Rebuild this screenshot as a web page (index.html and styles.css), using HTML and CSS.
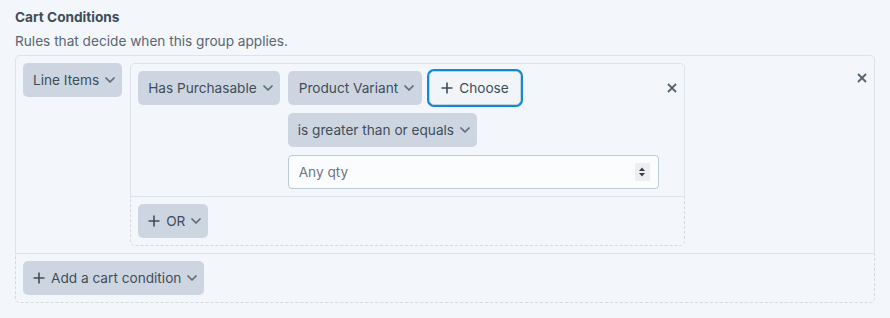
FILE: index.html
```html
<!DOCTYPE html>
<html>
<head>
<meta charset="utf-8">
<link rel="stylesheet" href="styles.css">
</head>
<body>
<div class="page">
  <div class="title">Cart Conditions</div>
  <div class="subtitle">Rules that decide when this group applies.</div>
  <div class="conditions">
    <div class="cond-row">
      <div class="btn select">Line Items <svg class="chev" viewBox="0 0 10 6"><path d="M1 1l4 4 4-4"/></svg></div>
      <div class="rule-group">
        <div class="rule">
          <div class="btn select">Has Purchasable <svg class="chev" viewBox="0 0 10 6"><path d="M1 1l4 4 4-4"/></svg></div>
          <div class="rule-col">
            <div class="line">
              <div class="btn select wide">Product Variant <svg class="chev" viewBox="0 0 10 6"><path d="M1 1l4 4 4-4"/></svg></div>
              <div class="btn choose"><svg class="plus" viewBox="0 0 12 12"><path d="M6 0.5v11M0.5 6h11"/></svg>Choose</div>
            </div>
            <div class="line">
              <div class="btn select">is greater than or equals <svg class="chev" viewBox="0 0 10 6"><path d="M1 1l4 4 4-4"/></svg></div>
            </div>
            <div class="line">
              <div class="input-wrap">
                <input class="text" type="text" placeholder="Any qty">
                <span class="spin"><svg viewBox="0 0 8 12"><path d="M4 1.5L7 5H1z M4 10.5L1 7h6z"/></svg></span>
              </div>
            </div>
          </div>
          <div class="close"><svg viewBox="0 0 10 10"><path d="M1 1l8 8M9 1l-8 8"/></svg></div>
        </div>
        <div class="or-row">
          <div class="btn select"><svg class="plus" viewBox="0 0 12 12"><path d="M6 0.5v11M0.5 6h11"/></svg>OR <svg class="chev" viewBox="0 0 10 6"><path d="M1 1l4 4 4-4"/></svg></div>
        </div>
      </div>
      <div class="close outer-close"><svg viewBox="0 0 10 10"><path d="M1 1l8 8M9 1l-8 8"/></svg></div>
    </div>
    <div class="add-row">
      <div class="btn select"><svg class="plus" viewBox="0 0 12 12"><path d="M6 0.5v11M0.5 6h11"/></svg>Add a cart condition <svg class="chev" viewBox="0 0 10 6"><path d="M1 1l4 4 4-4"/></svg></div>
    </div>
  </div>
</div>
</body>
</html>
```
FILE: styles.css
```css
html, body {
  margin: 0;
  padding: 0;
  background: #f3f6fa;
}
body {
  font-family: Inter, "Noto Sans", sans-serif;
  font-size: 13.65px;
  color: #3f4d5a;
}
.page {
  padding: 7px 15px 15px 15px;
}
.title {
  font-weight: 700;
  line-height: 20px;
  color: #3f4d5a;
}
.subtitle {
  margin-top: 4px;
  line-height: 20px;
  color: #596673;
}
.conditions {
  margin-top: 4px;
}
.cond-row {
  display: flex;
  align-items: flex-start;
  gap: 8px;
  padding: 7px;
  border: 1px solid #dde3ea;
  border-radius: 5px 5px 0 0;
}
.add-row {
  padding: 7px;
  border: 1px dashed #d3d9e0;
  border-top: none;
  border-radius: 0 0 5px 5px;
}
.btn {
  display: inline-flex;
  align-items: center;
  height: 34px;
  box-sizing: border-box;
  border-radius: 5px;
  white-space: nowrap;
  line-height: 20px;
}
.select {
  background: #cdd6e0;
  padding: 0 7px 0 10px;
  color: #3f4d5a;
}
.select.wide {
  padding: 0 8px 0 11px;
}
.chev {
  width: 10px;
  height: 6px;
  margin-left: 6px;
  fill: none;
  stroke: #5f6b78;
  stroke-width: 1.7;
  stroke-linecap: round;
  stroke-linejoin: round;
}
.plus {
  width: 12px;
  height: 12px;
  margin-right: 6px;
  fill: none;
  stroke: #3f4d5a;
  stroke-width: 1.6;
}
.rule-group {
  width: 555px;
  box-sizing: border-box;
}
.rule {
  display: flex;
  align-items: flex-start;
  gap: 8px;
  padding: 7px;
  border: 1px solid #dde3ea;
  border-radius: 5px 5px 0 0;
}
.rule-col {
  display: flex;
  flex-direction: column;
  gap: 8px;
}
.line {
  display: flex;
  gap: 7px;
}
.choose {
  background: #f1f5fa;
  padding: 0 11px 0 11px;
  border: 1px solid #c6d1dc;
  box-shadow: 0 0 0 2px #0f8ad6;
  border-radius: 5px;
  color: #3f4d5a;
}
.input-wrap {
  position: relative;
  width: 371px;
}
.text {
  display: block;
  width: 100%;
  height: 34px;
  box-sizing: border-box;
  border: 1px solid #bccad8;
  border-radius: 4px;
  background: #fbfcfe;
  padding: 0 10px;
  font-family: inherit;
  font-size: 13.65px;
  color: #3f4d5a;
}
.text::placeholder {
  color: #6b7784;
}
.spin {
  position: absolute;
  right: 9px;
  top: 8px;
  width: 15px;
  height: 18px;
  background: #eceef1;
  display: flex;
  align-items: center;
  justify-content: center;
}
.spin svg {
  width: 8px;
  height: 12px;
  fill: #3a3f45;
}
.close {
  margin-left: auto;
  width: 10px;
  height: 34px;
  display: flex;
  align-items: center;
  justify-content: center;
}
.close svg {
  width: 10px;
  height: 10px;
  fill: none;
  stroke: #55626f;
  stroke-width: 1.8;
}
.outer-close {
  height: 30px;
}
.or-row {
  padding: 7px;
  border: 1px dashed #d3d9e0;
  border-top: none;
  border-radius: 0 0 5px 5px;
}
```
